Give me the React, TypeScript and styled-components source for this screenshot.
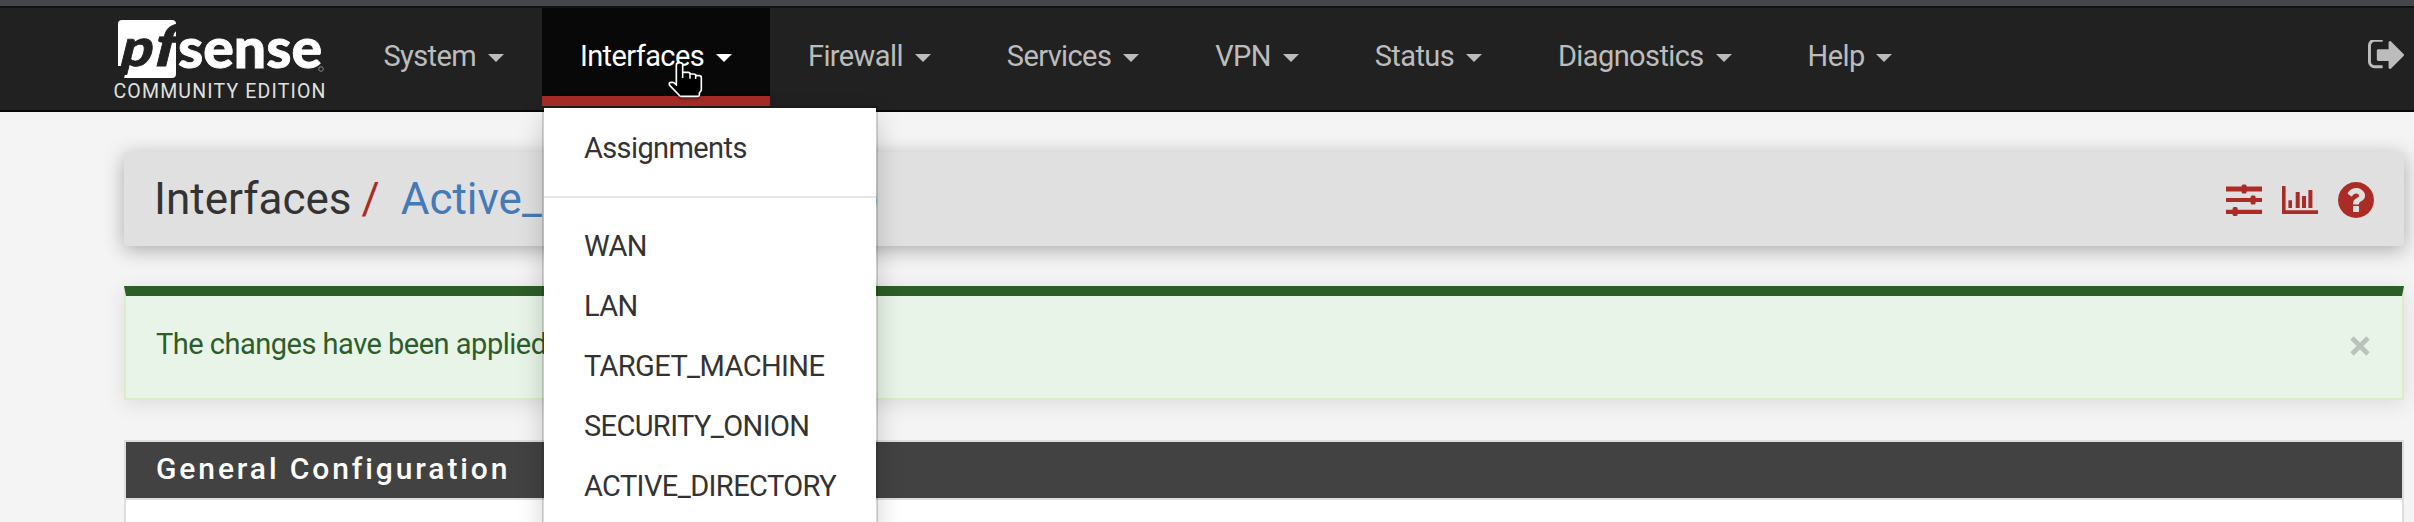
import React from "react";
import styled, { createGlobalStyle } from "styled-components";

const Global = createGlobalStyle`
  * { box-sizing: border-box; }
  body {
    margin: 0;
    background: #f4f4f4;
    color: #333;
    font-family: Roboto, "Liberation Sans", sans-serif;
    font-size: 29px;
    letter-spacing: -0.6px;
    overflow: hidden;
  }
`;

const Page = styled.div`
  height: 522px;
  overflow: hidden;
`;

const WindowEdge = styled.div`
  height: 8px;
  background: #45464b;
  border-bottom: 2px solid #111214;
`;

const Navbar = styled.nav`
  display: flex;
  height: 104px;
  padding: 0 10px 0 114px;
  background: #212121;
  border-bottom: 2px solid #080808;
`;

const Brand = styled.a`
  width: 231.4px;
  height: 100px;
`;

const NavItem = styled.div<{ $open?: boolean }>`
  position: relative;
  display: flex;
  align-items: center;
  height: 98px;
  padding: 7px 38px 0;
  line-height: 40px;
  color: ${(p) => (p.$open ? "#fff" : "#bcbcbc")};
  background: ${(p) => (p.$open ? "#080808" : "transparent")};
  border-bottom: 10px solid ${(p) => (p.$open ? "#a52c26" : "transparent")};
`;

const Caret = styled.span`
  margin: 5px 0 0 11.9px;
  border-top: 8px solid currentColor;
  border-left: 8px solid transparent;
  border-right: 8px solid transparent;
`;

const Logout = styled.a`
  display: flex;
  margin: 32px 0 0 auto;
  color: #bcbcbc;
`;

const Menu = styled.div`
  position: absolute;
  z-index: 2;
  top: 98px;
  left: 0;
  width: 336px;
  height: 520px;
  padding: 10px 0;
  color: #333;
  background: #fff;
  background-clip: padding-box;
  border: 2px solid rgba(0, 0, 0, 0.15);
  box-shadow: 0 12px 24px rgba(0, 0, 0, 0.175);
`;

const MenuItem = styled.div`
  height: 60px;
  padding-left: 40px;
  line-height: 60px;
  white-space: nowrap;
`;

const Divider = styled.div`
  height: 2px;
  margin: 18px 0;
  background: #e5e5e5;
`;

const Pointer = styled.svg`
  position: absolute;
  z-index: 3;
  left: 123px;
  top: 53px;
  filter: drop-shadow(0 2px 1px rgba(0, 0, 0, 0.4));
`;

const Content = styled.main`
  display: flex;
  flex-direction: column;
  gap: 40px;
  padding: 40px 10px 0 124px;
`;

const Header = styled.header`
  display: flex;
  align-items: center;
  height: 94px;
  padding: 0 30px;
  background: #e0e0e0;
  border-radius: 4px;
  box-shadow: 0 4px 20px rgba(0, 0, 0, 0.3);
`;

const Crumbs = styled.h1`
  display: flex;
  margin: 0;
  font-size: 44px;
  font-weight: 400;
  letter-spacing: 0;
  line-height: 60px;
  white-space: pre;
`;

const Slash = styled.span`
  margin: 0 21px 0 10px;
  color: #ab2b26;
`;

const Current = styled.span`
  color: #447ab8;
`;

const Port = styled.span`
  margin-left: 34px;
`;

const Tools = styled.div`
  display: flex;
  gap: 20px;
  margin: 2px 0 0 auto;
  color: #ab2b26;
`;

const Alert = styled.div`
  display: flex;
  justify-content: space-between;
  height: 114px;
  padding: 28px 32px 0 30px;
  color: #2d5d28;
  line-height: 40px;
  letter-spacing: -0.5px;
  background: #e8f4e8;
  border: 2px solid #dcebc8;
  border-top: 10px solid #2d5d28;
  box-shadow: 0 4px 20px rgba(0, 0, 0, 0.1);
`;

const Close = styled.svg`
  margin-top: 12px;
`;

const Panel = styled.section`
  height: 200px;
  background: #fff;
  border: 2px solid #ddd;
`;

const PanelTitle = styled.h2`
  height: 58px;
  margin: 0;
  padding-left: 30px;
  color: #fff;
  font-size: 30px;
  font-weight: 500;
  letter-spacing: 2.9px;
  line-height: 54px;
  background: #424242;
  border-bottom: 2px solid #ddd;
`;

const Logo = () => (
  <svg width="216" height="100" viewBox="114 8 216 100" letterSpacing="0">
    <rect x="118" y="20" width="58" height="58" rx="4" fill="#fff" />
    <path d="M118 66h9.5l-3.5 12h-6z" fill="#212121" />
    <g fontFamily="Lato, sans-serif" fontWeight="900">
      <g fill="#212121" stroke="#212121" strokeWidth="0.8">
        <text transform="translate(118 66) skewX(-14)" fontSize="52" textLength="32" lengthAdjust="spacingAndGlyphs">p</text>
        <text transform="translate(151 66) skewX(-14)" fontSize="57" textLength="23" lengthAdjust="spacingAndGlyphs">f</text>
      </g>
      <text x="178" y="68" fontSize="56" fill="#fff" stroke="#fff" strokeWidth="0.8" textLength="144" lengthAdjust="spacingAndGlyphs">sense</text>
    </g>
    <circle cx="321" cy="69" r="2.3" fill="none" stroke="#888" />
    <text x="113.5" y="98" fontSize="19.5" fill="#e0e0e0" textLength="212" lengthAdjust="spacing">COMMUNITY EDITION</text>
  </svg>
);

const SignOutIcon = () => (
  <svg width="36" height="30" viewBox="0 -14 1568 1306" fill="currentColor">
    <path transform="matrix(1 0 0 -1 0 1280)" d="M640 96q0 4 1 20t0.5 26.5t-3 23.5t-10 19.5t-20.5 6.5h-320q-66 0 -113 47t-47 113v704q0 66 47 113t113 47h288h11h13t11.5 1t11.5 3t8 5.5t7 9t2 13.5q0 4 1 20t0.5 26.5t-3 23.5t-10 19.5t-20.5 6.5h-320q-119 0 -203.5 -84.5t-84.5 -203.5v-704q0 -119 84.5 -203.5t203.5 -84.5h320q13 0 22.5 9.5t9.5 22.5zM1568 640q0 -26 -19 -45l-544 -544q-19 -19 -45 -19t-45 19t-19 45v288h-448q-26 0 -45 19t-19 45v384q0 26 19 45t45 19h448v288q0 26 19 45t45 19t45 -19l544 -544q19 -19 19 -45z" />
  </svg>
);

const SlidersIcon = () => (
  <svg width="36" height="36" viewBox="0 0 36 36" fill="currentColor">
    <path d="M0 4.5h36v5H0zM0 16h36v4H0zM0 27.7h36v4.3H0z" />
    <rect x="15.6" y="2.5" width="5" height="9" rx="1.5" />
    <rect x="24.6" y="13.5" width="5" height="9" rx="1.5" />
    <rect x="6.6" y="25" width="5" height="9" rx="1.5" />
  </svg>
);

const ChartIcon = () => (
  <svg width="36" height="36" viewBox="0 0 36 36" fill="currentColor">
    <path d="M0 4h3.6v24.3H36V32H0zM6.4 18.3H10V26H6.4zM13.7 10h4v16h-4zM20 14h4v12h-4zM26.4 8h4v18h-4z" />
  </svg>
);

const HelpIcon = () => (
  <svg width="36" height="36" viewBox="0 -128 1536 1536" fill="currentColor">
    <path transform="matrix(1 0 0 -1 0 1280)" d="M896 160v192q0 14 -9 23t-23 9h-192q-14 0 -23 -9t-9 -23v-192q0 -14 9 -23t23 -9h192q14 0 23 9t9 23zM1152 832q0 88 -55.5 163t-138.5 116t-170 41q-243 0 -371 -213q-15 -24 8 -42l132 -100q7 -6 19 -6q16 0 25 12q53 68 86 92q34 24 86 24q48 0 85.5 -26t37.5 -59q0 -38 -20 -61t-68 -45q-63 -28 -115.5 -86.5t-52.5 -125.5v-36q0 -14 9 -23t23 -9h192q14 0 23 9t9 23q0 19 21.5 49.5t54.5 49.5q32 18 49 28.5t46 35t44.5 48t28 60.5t12.5 81zM1536 640q0 -209 -103 -385.5t-279.5 -279.5t-385.5 -103t-385.5 103t-279.5 279.5t-103 385.5t103 385.5t279.5 279.5t385.5 103t385.5 -103t279.5 -279.5t103 -385.5z" />
  </svg>
);

const HandPointer = () => (
  <Pointer width="38" height="38" viewBox="76 62 114 114">
    <path
      d="M110 132V74q0-7 10-7t9 7v22h16q7 0 7 5h10q7 0 7 5h9q7 0 7 6v38l-6 8v6q0 4-5 4h-50q-4 0-6-4l-28-29q-4-9 4-9h5q5 0 11 8z"
      fill="#000" stroke="#fff" strokeWidth="5" strokeLinejoin="round"
    />
    <path d="M129 94v19M151 99v16M168 104v12" stroke="#fff" strokeWidth="4.5" />
  </Pointer>
);

const assigned = ["WAN", "LAN", "TARGET_MACHINE", "SECURITY_ONION", "ACTIVE_DIRECTORY"];
const sections = ["System", "Interfaces", "Firewall", "Services", "VPN", "Status", "Diagnostics", "Help"];

export default function App() {
  return (
    <Page>
      <Global />
      <WindowEdge />
      <Navbar>
        <Brand><Logo /></Brand>
        {sections.map((name) => (
          <NavItem key={name} $open={name === "Interfaces"}>
            {name}
            <Caret />
            {name === "Interfaces" && (
              <>
                <Menu>
                  <MenuItem>Assignments</MenuItem>
                  <Divider />
                  {assigned.map((m) => <MenuItem key={m}>{m}</MenuItem>)}
                </Menu>
                <HandPointer />
              </>
            )}
          </NavItem>
        ))}
        <Logout><SignOutIcon /></Logout>
      </Navbar>
      <Content>
        <Header>
          <Crumbs>
            Interfaces<Slash>/</Slash>
            <Current>Active_Directory <Port>(em4)</Port></Current>
          </Crumbs>
          <Tools><SlidersIcon /><ChartIcon /><HelpIcon /></Tools>
        </Header>
        <Alert>
          The changes have been applied successfully.
          <Close width="20" height="20" viewBox="0 0 20 20">
            <path d="M2 2l16 16M18 2L2 18" stroke="#bac3b9" strokeWidth="4.6" />
          </Close>
        </Alert>
        <Panel>
          <PanelTitle>General Configuration</PanelTitle>
        </Panel>
      </Content>
    </Page>
  );
}
